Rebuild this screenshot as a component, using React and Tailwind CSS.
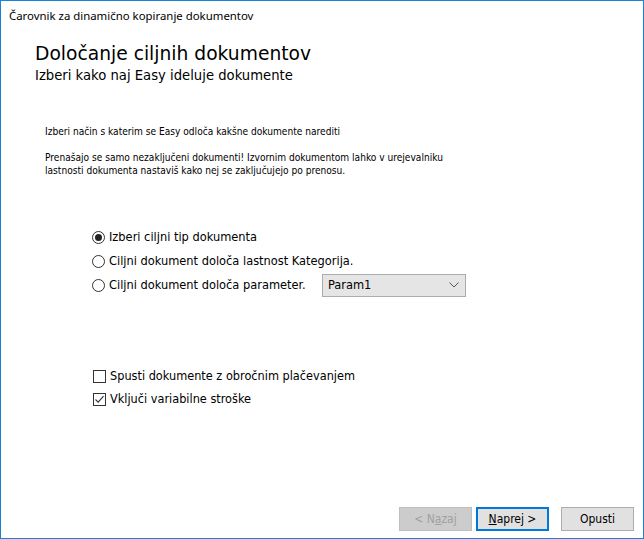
import React from "react";

const tahoma = { fontFamily: '"DejaVu Sans Condensed","DejaVu Sans",sans-serif' };
const verdana = { fontFamily: '"DejaVu Sans",sans-serif' };

function Radio({ checked, children, extra }) {
  return (
    <div className="flex items-center h-[24px]">
      <span className="w-[13px] h-[13px] rounded-full border border-[#333] bg-white flex items-center justify-center mr-[4px]">
        {checked && <span className="w-[7px] h-[7px] rounded-full bg-[#222]" />}
      </span>
      <span className="text-[12.7px] text-black leading-none" style={tahoma}>{children}</span>
      {extra}
    </div>
  );
}

function Check({ checked, children }) {
  return (
    <div className="flex items-center h-[23px]">
      <span className="w-[13px] h-[13px] border border-[#333] bg-white flex items-center justify-center mr-[4px]">
        {checked && (
          <svg width="11" height="11" viewBox="0 0 11 11">
            <path d="M1.5 5.5 L4.2 8.2 L9.5 2.2" fill="none" stroke="#333" strokeWidth="1.1" />
          </svg>
        )}
      </span>
      <span className="text-[12.6px] text-black leading-none" style={tahoma}>{children}</span>
    </div>
  );
}

export default function App() {
  return (
    <div className="w-[644px] h-[539px] border border-[#1883d7] bg-white flex flex-col overflow-hidden">
      <div className="pl-[8px] pt-[7px] h-[24px] text-[11.4px] leading-[16px] text-black" style={{ fontFamily: '"Noto Sans",sans-serif' }}>
        Čarovnik za dinamično kopiranje dokumentov
      </div>
      <div className="pl-[34px] mt-[17px]" style={verdana}>
        <div className="text-[18.7px] leading-[23px] text-black">Določanje ciljnih dokumentov</div>
        <div className="text-[13.2px] leading-[16px] text-black mt-[3px]">Izberi kako naj Easy ideluje dokumente</div>
      </div>
      <div className="pl-[44px] mt-[41px] text-[10.1px] leading-[13px] text-black" style={tahoma}>
        <div>Izberi način s katerim se Easy odloča kakšne dokumente narediti</div>
        <div className="mt-[13px]">
          Prenašajo se samo nezaključeni dokumenti! Izvornim dokumentom lahko v urejevalniku
          <br />
          lastnosti dokumenta nastaviš kako nej se zaključujejo po prenosu.
        </div>
      </div>
      <div className="pl-[91px] mt-[48px] flex flex-col">
        <Radio checked>Izberi ciljni tip dokumenta</Radio>
        <Radio>Ciljni dokument določa lastnost Kategorija.</Radio>
        <Radio
          extra={
            <div className="ml-auto mr-[177px] w-[144px] h-[23px] border border-[#acacac] bg-[#e5e5e5] flex items-center pl-[5px] pr-[6px]">
              <span className="text-[12.7px] text-black flex-1" style={tahoma}>Param1</span>
              <svg width="10" height="6" viewBox="0 0 10 6">
                <path d="M0.5 0.5 L5 5 L9.5 0.5" fill="none" stroke="#555" strokeWidth="1" />
              </svg>
            </div>
          }
        >
          Ciljni dokument določa parameter.
        </Radio>
      </div>
      <div className="pl-[92px] mt-[68px] flex flex-col">
        <Check>Spusti dokumente z obročnim plačevanjem</Check>
        <Check checked>Vključi variabilne stroške</Check>
      </div>
      <div className="mt-auto mb-[7px] flex justify-end pr-[9px] gap-0 text-[12px]" style={tahoma}>
        <button className="w-[73px] h-[24px] border border-[#bfbfbf] bg-[#cccccc] text-[#a0a0a0]">
          &lt; N<span className="underline">a</span>zaj
        </button>
        <button className="ml-[4px] w-[73px] h-[24px] border-2 border-[#0078d7] bg-[#e1e1e1] text-black">
          <span className="underline">N</span>aprej &gt;
        </button>
        <button className="ml-[12px] w-[73px] h-[24px] border border-[#adadad] bg-[#e1e1e1] text-black">
          Opusti
        </button>
      </div>
    </div>
  );
}
